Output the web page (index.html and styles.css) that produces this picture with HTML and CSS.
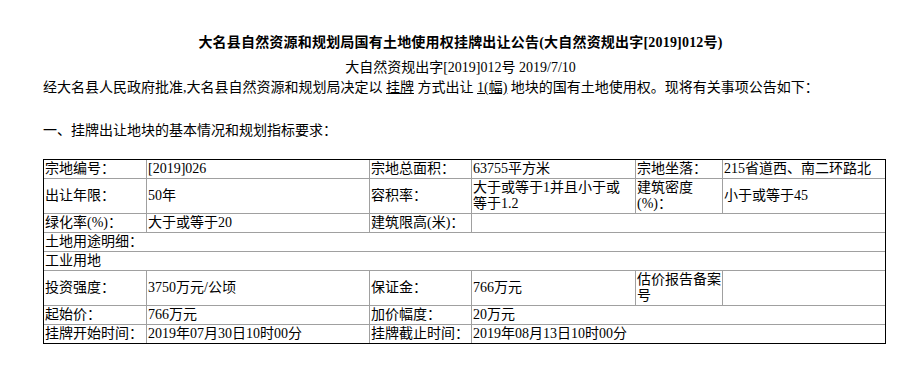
FILE: index.html
```html
<!DOCTYPE html>
<html lang="zh-CN">
<head>
<meta charset="utf-8">
<title>挂牌出让公告</title>
<link rel="stylesheet" href="styles.css">
</head>
<body>
<div class="page">
  <h1 class="title">大名县自然资源和规划局国有土地使用权挂牌出让公告(大自然资规出字[2019]012号)</h1>
  <div class="sub">大自然资规出字[2019]012号 2019/7/10</div>
  <p class="intro">经大名县人民政府批准,大名县自然资源和规划局决定以 <u>挂牌</u> 方式出让 <u>1(幅)</u> 地块的国有土地使用权。现将有关事项公告如下：</p>
  <p class="sec">一、挂牌出让地块的基本情况和规划指标要求：</p>
  <table class="info">
    <colgroup>
      <col class="c1"><col class="c2"><col class="c3"><col class="c4"><col class="c5"><col class="c6">
    </colgroup>
    <tr>
      <td>宗地编号：</td><td>[2019]026</td>
      <td>宗地总面积：</td><td>63755平方米</td>
      <td>宗地坐落：</td><td>215省道西、南二环路北</td>
    </tr>
    <tr>
      <td>出让年限：</td><td>50年</td>
      <td>容积率：</td><td class="tight">大于或等于1并且小于或等于1.2</td>
      <td>建筑密度(%)：</td><td>小于或等于45</td>
    </tr>
    <tr>
      <td>绿化率(%)：</td><td>大于或等于20</td>
      <td>建筑限高(米)：</td><td colspan="3"></td>
    </tr>
    <tr>
      <td colspan="6">土地用途明细：</td>
    </tr>
    <tr>
      <td colspan="6">工业用地</td>
    </tr>
    <tr>
      <td>投资强度：</td><td>3750万元/公顷</td>
      <td>保证金：</td><td>766万元</td>
      <td>估价报告备案号</td><td></td>
    </tr>
    <tr>
      <td>起始价：</td><td>766万元</td>
      <td>加价幅度：</td><td colspan="3">20万元</td>
    </tr>
    <tr>
      <td>挂牌开始时间：</td><td>2019年07月30日10时00分</td>
      <td>挂牌截止时间：</td><td colspan="3">2019年08月13日10时00分</td>
    </tr>
  </table>
</div>
</body>
</html>
```

FILE: styles.css
```css
html, body {
  margin: 0;
  padding: 0;
  background: #fff;
}

body {
  font-family: "Liberation Serif", "Noto Sans CJK SC", sans-serif;
  font-size: 14px;
  color: #000;
}

.page {
  padding: 33px 0 0 43px;
  width: 835px;
}

.title {
  margin: 0 0 5px 0;
  font-size: 14px;
  line-height: 20px;
  font-weight: bold;
  text-align: center;
  letter-spacing: 0.2px;
}

.sub {
  line-height: 20px;
  text-align: center;
}

.intro {
  margin: 0;
  line-height: 20px;
  white-space: nowrap;
}

.sec {
  margin: 23px 0 0 0;
  line-height: 20px;
}

.info {
  margin-top: 18px;
  border-collapse: separate;
  border-spacing: 0;
  border: 1px solid #000;
  table-layout: fixed;
  width: 843px;
}

.info col {
  box-sizing: border-box;
}

.c1 { width: 102px; }
.c2 { width: 223px; }
.c3 { width: 102px; }
.c4 { width: 164px; }
.c5 { width: 87px; }
.c6 { width: 163px; }

.info td {
  box-sizing: border-box;
  padding: 1px;
  line-height: 16px;
  vertical-align: middle;
  border-left: 1px solid #a0a0a0;
  border-top: 1px solid #a0a0a0;
}

.info td.tight {
  padding-right: 3px;
}

.info td:first-child {
  border-left: none;
}

.info tr:first-child td {
  border-top: none;
}
```
